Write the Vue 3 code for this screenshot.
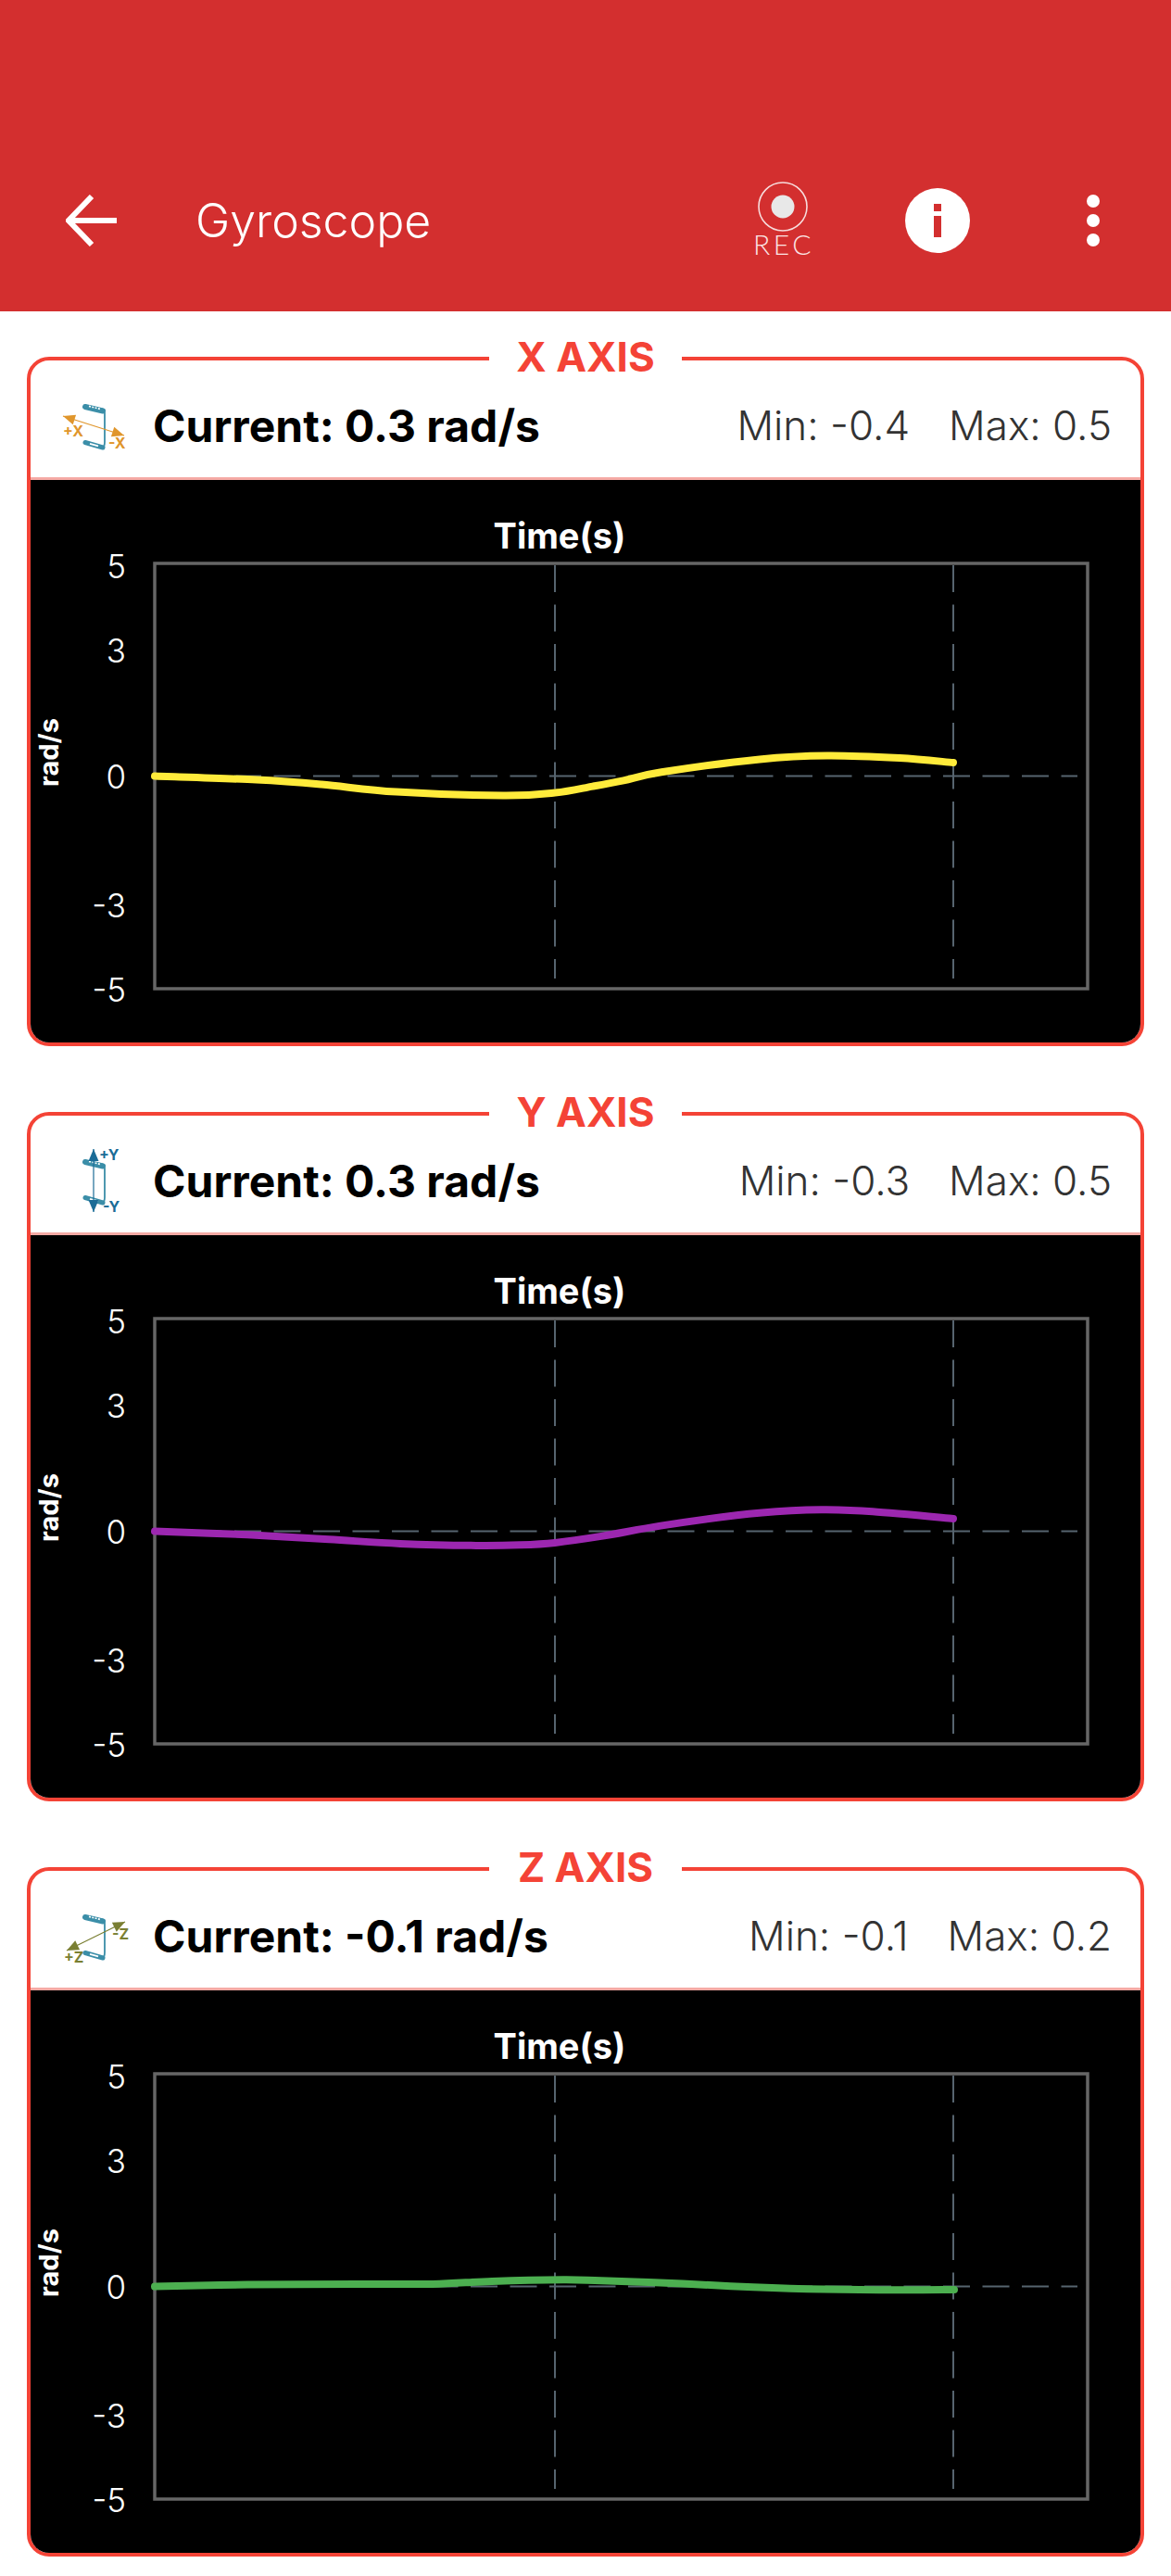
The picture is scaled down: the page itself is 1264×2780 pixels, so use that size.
<script setup>
// plot geometry, in the same units as the svg viewBox below
const plot = { left: 167, right: 1174, top: 608, bottom: 1067, zero: 837.6 }

const ticks = [
  { label: '5', y: 624 },
  { label: '3', y: 715 },
  { label: '0', y: 851 },
  { label: '-3', y: 989.5 },
  { label: '-5', y: 1080.5 }
]

const axes = [
  {
    name: 'X AXIS',
    current: '0.3',
    min: '-0.4',
    max: '0.5',
    line: '#ffeb3b',
    icon: '#e0962c',
    arrow: [[68, 449], [134, 470]],
    plus: { text: '+X', x: 68, y: 471 },
    minus: { text: '-X', x: 117, y: 484 },
    curve: [[167, 0], [277, 4], [347, 9], [428, 17], [543, 21], [599, 18], [640, 11], [673, 4.7], [714, -4.3], [820, -18.2], [893, -22.1], [971, -19.6], [1029, -14.6]]
  },
  {
    name: 'Y AXIS',
    current: '0.3',
    min: '-0.3',
    max: '0.5',
    line: '#9c27b0',
    icon: '#1b6c97',
    arrow: [[101, 425], [101, 493]],
    plus: { text: '+Y', x: 107, y: 437 },
    minus: { text: '-Y', x: 111, y: 493 },
    curve: [[167, 0], [267, 3.7], [355, 8.7], [432, 13.3], [514, 15.3], [561, 14.7], [599, 12.3], [649, 5.3], [713, -6], [795, -17.3], [854, -22.3], [892, -23.3], [942, -21.3], [1029, -13.7]]
  },
  {
    name: 'Z AXIS',
    current: '-0.1',
    min: '-0.1',
    max: '0.2',
    line: '#4caf50',
    icon: '#7a7f33',
    arrow: [[72, 475], [135, 444]],
    plus: { text: '+Z', x: 69, y: 488 },
    minus: { text: '-Z', x: 121, y: 463 },
    curve: [[167, 0], [267, -2], [385, -2.7], [467, -2.7], [531, -5.7], [608, -7.3], [649, -6.3], [737, -3], [813, 0.7], [889, 3], [971, 3.7], [1030, 3.3]]
  }
]

// catmull-rom through the sampled points so the line stays smooth
function linePath(curve) {
  const p = curve.map(([x, dy]) => [x, plot.zero + dy])
  let d = `M${p[0][0]} ${p[0][1]}`
  for (let i = 0; i < p.length - 1; i++) {
    const a = p[i - 1] || p[i]
    const b = p[i]
    const c = p[i + 1]
    const e = p[i + 2] || c
    const c1 = [b[0] + (c[0] - a[0]) / 6, b[1] + (c[1] - a[1]) / 6]
    const c2 = [c[0] - (e[0] - b[0]) / 6, c[1] - (e[1] - b[1]) / 6]
    d += ` C${c1[0].toFixed(1)} ${c1[1].toFixed(1)} ${c2[0].toFixed(1)} ${c2[1].toFixed(1)} ${c[0]} ${c[1].toFixed(1)}`
  }
  return d
}

// arrowhead triangle pointing at (x2, y2), coming from (x1, y1)
function head(x1, y1, x2, y2) {
  const len = Math.hypot(x2 - x1, y2 - y1)
  const ux = (x2 - x1) / len
  const uy = (y2 - y1) / len
  const bx = x2 - ux * 13
  const by = y2 - uy * 13
  return `${x2},${y2} ${bx - uy * 5.5},${by + ux * 5.5} ${bx + uy * 5.5},${by - ux * 5.5}`
}
</script>

<template>
  <div class="page">
    <header class="appbar">
      <svg class="back" width="56" height="56" viewBox="0 0 56 56">
        <path d="M55 28H4M28 2L3 28l25 26" fill="none" stroke="#fff" stroke-width="6" />
      </svg>
      <h1 class="title">Gyroscope</h1>
      <svg class="rec" width="80" height="84" viewBox="0 0 80 84">
        <circle cx="40" cy="27" r="26" fill="none" stroke="#f7dcdc" stroke-width="1.6" />
        <circle cx="40" cy="27" r="12.5" fill="#e8e8e8" />
        <text x="41" y="79" text-anchor="middle" class="rec-label">REC</text>
      </svg>
      <svg class="info" width="70" height="70" viewBox="0 0 70 70">
        <circle cx="35" cy="35" r="35" fill="#fff" />
        <rect x="31" y="17" width="8" height="8" fill="#d32f2f" />
        <rect x="31" y="30" width="8" height="23" fill="#d32f2f" />
      </svg>
      <div class="dots">
        <span></span>
        <span></span>
        <span></span>
      </div>
    </header>

    <section v-for="axis in axes" :key="axis.name" class="card">
      <div class="legend">{{ axis.name }}</div>
      <div class="head">
        <svg class="axis-icon" width="90" height="90" viewBox="60 407 90 90">
          <g fill="none" stroke="#3b8ea8">
            <path d="M92 439l19 4.5" stroke-width="6" stroke-linecap="round" />
            <path d="M96 438.4l12 3" stroke="#fff" stroke-width="1.6" stroke-dasharray="2 1.4" />
            <path d="M110 441q3 1 3 5v31q0 6-3 5" stroke-width="1.8" />
            <path d="M92 477.5l19 5.5" stroke-width="5" stroke-linecap="round" />
            <path d="M97 478.8l9 2.5" stroke="#fff" stroke-width="1.8" />
          </g>
          <g :fill="axis.icon" :stroke="axis.icon">
            <line :x1="axis.arrow[0][0]" :y1="axis.arrow[0][1]" :x2="axis.arrow[1][0]" :y2="axis.arrow[1][1]" stroke-width="1.2" />
            <polygon :points="head(axis.arrow[1][0], axis.arrow[1][1], axis.arrow[0][0], axis.arrow[0][1])" stroke="none" />
            <polygon :points="head(axis.arrow[0][0], axis.arrow[0][1], axis.arrow[1][0], axis.arrow[1][1])" stroke="none" />
          </g>
          <text :x="axis.plus.x" :y="axis.plus.y" :fill="axis.icon" class="icon-label">{{ axis.plus.text }}</text>
          <text :x="axis.minus.x" :y="axis.minus.y" :fill="axis.icon" class="icon-label">{{ axis.minus.text }}</text>
        </svg>
        <div class="current">Current: {{ axis.current }} rad/s</div>
        <div class="range">
          <span>Min: {{ axis.min }}</span>
          <span>Max: {{ axis.max }}</span>
        </div>
      </div>
      <div class="chart">
        <svg width="1198" height="607" viewBox="33 518 1198 607">
          <text x="604" y="592" text-anchor="middle" class="time">Time(s)</text>
          <text class="unit" transform="translate(63 812) rotate(-90)" text-anchor="middle">rad/s</text>
          <text v-for="t in ticks" :key="t.label" x="136" :y="t.y" text-anchor="end" class="tick">{{ t.label }}</text>
          <rect
            :x="plot.left"
            :y="plot.top"
            :width="plot.right - plot.left"
            :height="plot.bottom - plot.top"
            fill="none"
            stroke="#666"
            stroke-width="3.5"
          />
          <line :x1="plot.left + 1" :y1="plot.zero" x2="1163" :y2="plot.zero" class="grid" />
          <line x1="599" y1="610" x2="599" y2="1056" class="grid" />
          <line x1="1029" y1="610" x2="1029" y2="1056" class="grid" />
          <path :d="linePath(axis.curve)" fill="none" :stroke="axis.line" stroke-width="8" stroke-linecap="round" />
        </svg>
      </div>
    </section>
  </div>
</template>

<style scoped>
.page {
  font-family: Inter, "Liberation Sans", sans-serif;
  padding-bottom: 20px;
}

.appbar {
  display: flex;
  align-items: center;
  height: 196px;
  padding: 140px 77px 0 71px;
  background: #d32f2f;
}

.back {
  flex: none;
}

.title {
  margin: 0 0 0 84px;
  font-size: 50px;
  font-weight: 300;
  color: #fff;
}

.rec {
  flex: none;
  margin-left: auto;
}

.rec-label {
  font-family: Lato, sans-serif;
  font-size: 30px;
  font-weight: 300;
  letter-spacing: 3.5px;
  fill: #fbe4e4;
}

.info {
  flex: none;
  margin-left: 92px;
}

.dots {
  display: flex;
  flex-direction: column;
  gap: 7px;
  margin-left: 126px;
}

.dots span {
  width: 14px;
  height: 14px;
  border-radius: 50%;
  background: #fff;
}

.card {
  position: relative;
  margin: 49px 29px 0;
  border: 4px solid #f44336;
  border-radius: 24px;
}

.card + .card {
  margin-top: 71px;
}

.legend {
  position: absolute;
  top: -26px;
  left: 495px;
  width: 208px;
  background: #fff;
  color: #f44336;
  font-size: 44px;
  font-weight: 700;
  line-height: 44px;
  text-align: center;
}

.head {
  display: flex;
  align-items: center;
  height: 126px;
  padding: 0 31px 0 27px;
  border-bottom: 3px solid #f5aaa5;
}

.axis-icon {
  flex: none;
  margin-right: 15px;
}

.current {
  margin-top: 14px;
  font-size: 48px;
  font-weight: 700;
  color: #000;
}

.range {
  display: flex;
  gap: 42px;
  margin-top: 14px;
  margin-left: auto;
  font-size: 44px;
  font-weight: 300;
  color: #333;
}

.chart {
  overflow: hidden;
  border-radius: 0 0 20px 20px;
  background: #000;
}

.chart svg {
  display: block;
}

.time {
  font-size: 38px;
  font-weight: 700;
  fill: #fff;
}

.unit {
  font-size: 29px;
  font-weight: 700;
  fill: #fff;
}

.tick {
  font-size: 35px;
  font-weight: 300;
  fill: #fff;
}

.grid {
  stroke: #56646f;
  stroke-width: 2;
  stroke-dasharray: 29 13.5;
}

.icon-label {
  font-size: 16px;
  font-weight: 700;
}
</style>
